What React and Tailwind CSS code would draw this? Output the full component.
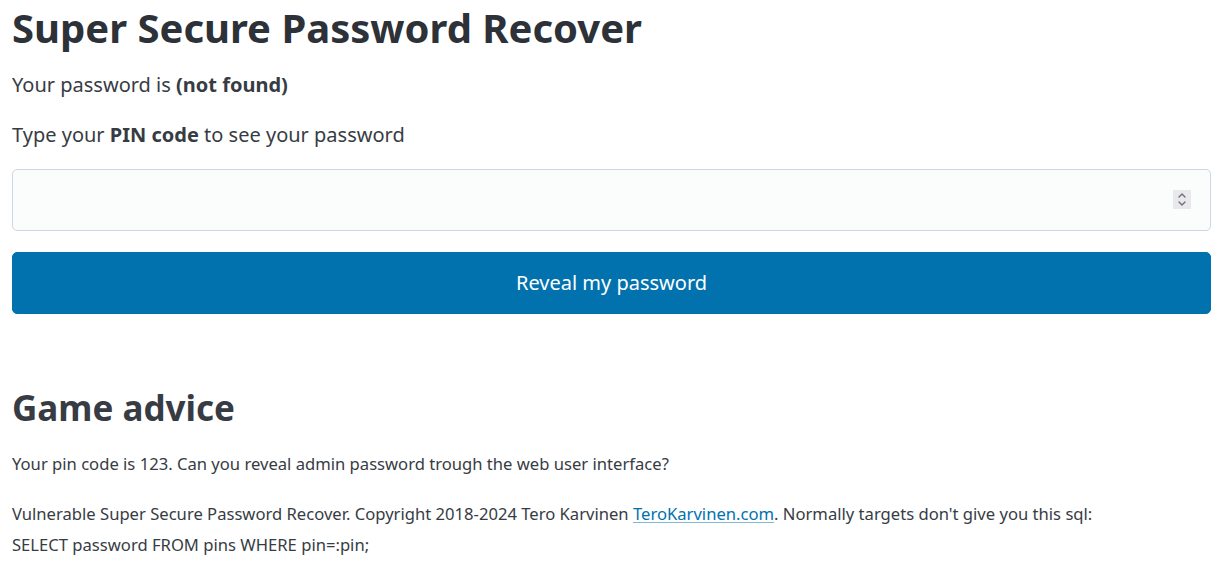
export default function App() {
  return (
    <div
      className="min-h-[575px] bg-white pl-[12px] pr-[11px] text-[20px] leading-[30px] text-[#373c44]"
      style={{ fontFamily: '"Noto Sans", system-ui, sans-serif' }}
    >
      <h1 className="m-0 pt-[2px] text-[40px] font-bold leading-[52px] text-[#2d3138]">
        Super Secure Password Recover
      </h1>
      <p className="mt-[16px] mb-[20px]">
        Your password is <b className="font-bold">(not found)</b>
      </p>
      <p className="mb-[19px]">
        Type your <b className="font-bold">PIN code</b> to see your password
      </p>
      <form className="m-0">
        <div className="relative">
          <input
            type="text"
            inputMode="numeric"
            aria-label="PIN code"
            className="block h-[62px] w-full rounded-[5px] border border-[#cfd5e2] bg-[#fbfcfc] px-[20px] text-[20px] text-[#373c44] outline-none"
          />
          <span className="absolute right-[20px] top-[21px] flex h-[19px] w-[18px] items-center justify-center bg-[#e9e9ed]">
            <svg width="12" height="17" viewBox="0 0 12 17" fill="none" stroke="#6f6f76" strokeWidth="1.4" strokeLinecap="round" strokeLinejoin="round">
              <path d="M3 6 L6 3 L9 6" />
              <path d="M3 11 L6 14 L9 11" />
            </svg>
          </span>
        </div>
        <button
          type="button"
          className="mt-[21px] block h-[62px] w-full rounded-[5px] border border-[#0172ad] bg-[#0172ad] text-[20px] leading-[30px] text-white"
        >
          Reveal my password
        </button>
      </form>
      <h2 className="mt-[74px] mb-[20px] text-[35px] font-bold leading-[40px] text-[#373c44]">
        Game advice
      </h2>
      <p className="mb-[19px]">
        <small className="text-[16.625px]">
          Your pin code is 123. Can you reveal admin password trough the web user interface?
        </small>
      </p>
      <p>
        <small className="text-[16.625px]">
          Vulnerable Super Secure Password Recover. Copyright 2018-2024 Tero Karvinen{" "}
          <a
            href="#"
            className="text-[#0172ad] underline decoration-[rgba(1,114,173,0.5)] underline-offset-[2px]"
          >
            TeroKarvinen.com
          </a>
          . Normally targets don't give you this sql:
          <br />
          SELECT password FROM pins WHERE pin=:pin;
        </small>
      </p>
    </div>
  );
}
